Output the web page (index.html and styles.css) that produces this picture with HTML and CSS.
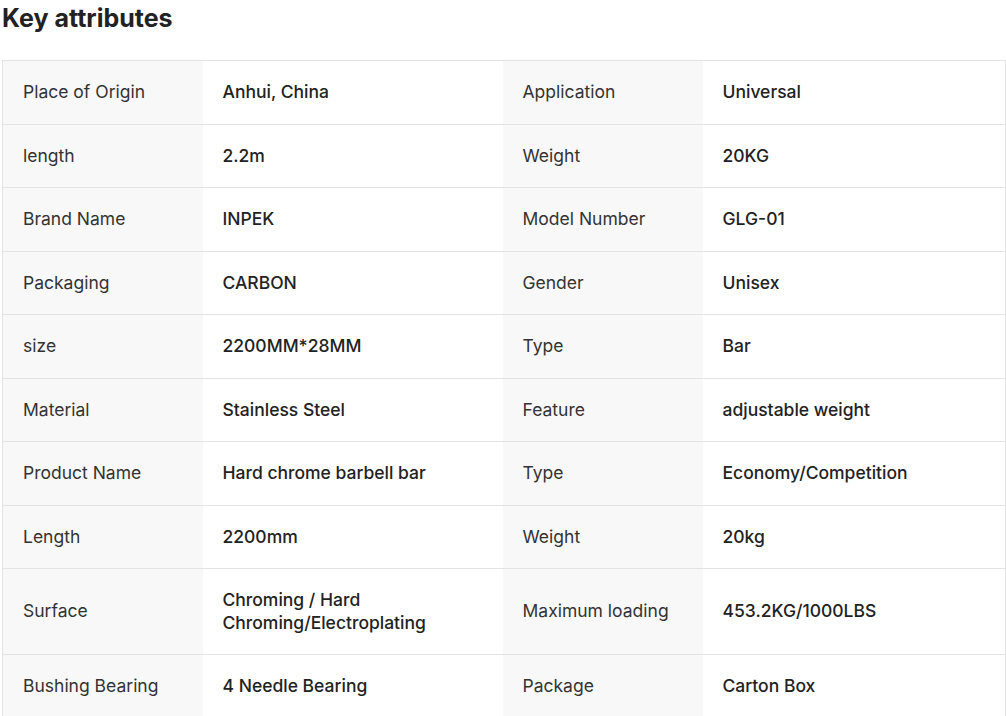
FILE: index.html
```html
<!DOCTYPE html>
<html>
<head>
<meta charset="utf-8">
<link rel="stylesheet" href="styles.css">
</head>
<body>
<div class="wrap">
<h2 class="title">Key attributes</h2>
<table class="attrs">
<colgroup><col class="c-lab"><col class="c-val"><col class="c-lab"><col class="c-val2"></colgroup>
<tr><td class="lab">Place of Origin</td><td class="val">Anhui, China</td><td class="lab">Application</td><td class="val">Universal</td></tr>
<tr><td class="lab">length</td><td class="val">2.2m</td><td class="lab">Weight</td><td class="val">20KG</td></tr>
<tr><td class="lab">Brand Name</td><td class="val">INPEK</td><td class="lab">Model Number</td><td class="val">GLG-01</td></tr>
<tr><td class="lab">Packaging</td><td class="val">CARBON</td><td class="lab">Gender</td><td class="val">Unisex</td></tr>
<tr><td class="lab">size</td><td class="val">2200MM*28MM</td><td class="lab">Type</td><td class="val">Bar</td></tr>
<tr><td class="lab">Material</td><td class="val">Stainless Steel</td><td class="lab">Feature</td><td class="val">adjustable weight</td></tr>
<tr><td class="lab">Product Name</td><td class="val">Hard chrome barbell bar</td><td class="lab">Type</td><td class="val">Economy/Competition</td></tr>
<tr><td class="lab">Length</td><td class="val">2200mm</td><td class="lab">Weight</td><td class="val">20kg</td></tr>
<tr><td class="lab">Surface</td><td class="val">Chroming / Hard Chroming/Electroplating</td><td class="lab">Maximum loading</td><td class="val">453.2KG/1000LBS</td></tr>
<tr><td class="lab">Bushing Bearing</td><td class="val">4 Needle Bearing</td><td class="lab">Package</td><td class="val">Carton Box</td></tr>
</table>
</div>
</body>
</html>
```
FILE: styles.css
```css
html, body {
  margin: 0;
  padding: 0;
  background: #fff;
}
body {
  font-family: Inter, "Noto Sans", Arial, sans-serif;
  color: #222;
}
.wrap {
  padding: 0 2px;
}
.title {
  margin: 0;
  padding-top: 2px;
  font-size: 25px;
  line-height: 32px;
  font-weight: 700;
  color: #222;
  height: 58px;
}
.attrs {
  width: 1003px;
  border-collapse: collapse;
  table-layout: fixed;
  border: 1px solid #e3e3e3;
}
.c-lab { width: 200px; }
.c-val { width: 300px; }
.c-val2 { width: 303px; }
.attrs td {
  border-bottom: 1px solid #e3e3e3;
  padding: 20px 20px;
  font-size: 17.5px;
  line-height: 22.5px;
  vertical-align: middle;
}
.lab {
  background: #f8f8f8;
  color: #333;
  font-weight: 400;
}
.val {
  background: #fff;
  color: #222;
  font-weight: 500;
}
```
